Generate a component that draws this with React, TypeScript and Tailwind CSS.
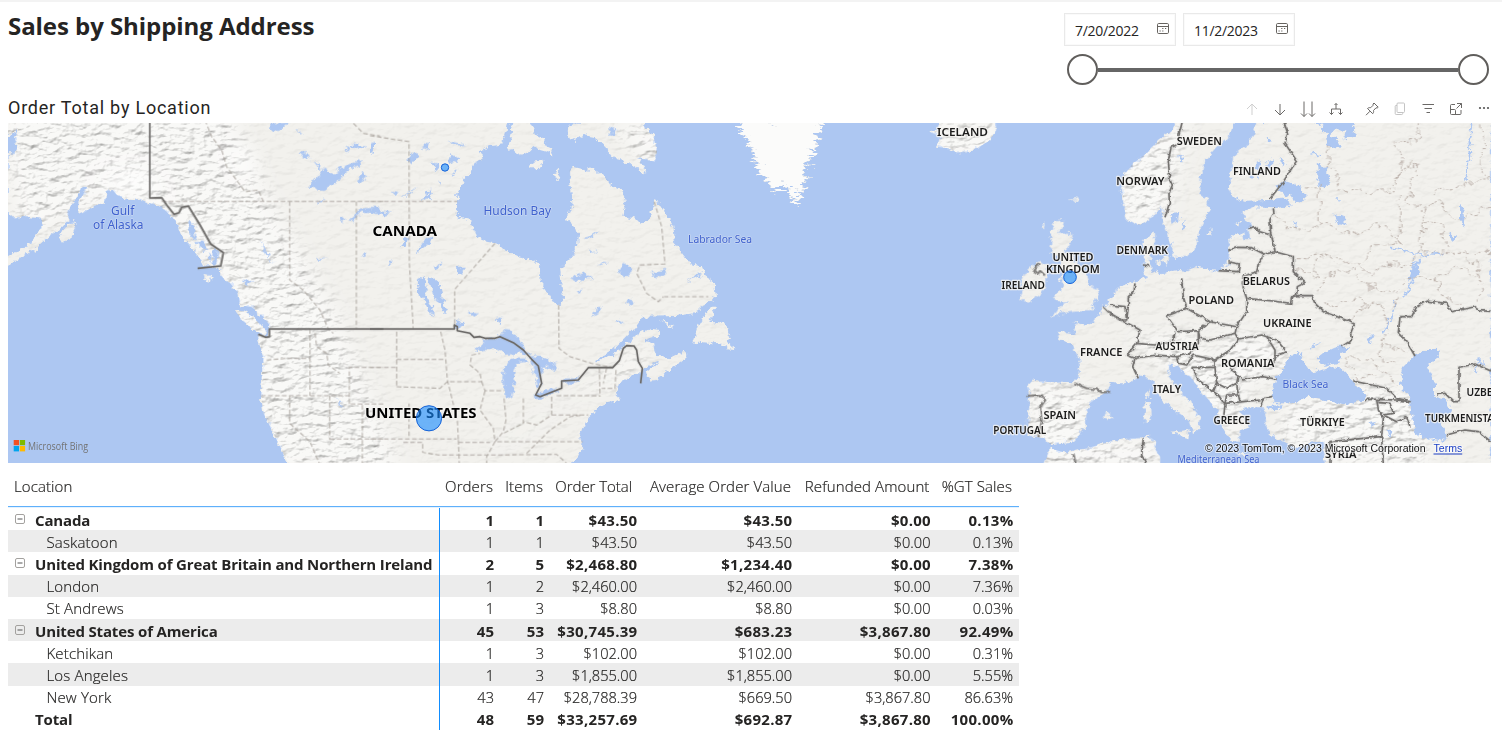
import React from 'react';

type Shape = { x: number; d: string; fill?: string };

const land: Shape[] = [
  // Alaska and western North America
  { x: 0, d: 'M24 0H1150V1040H870L850 1000L820 940L803 905L790 880L783 830L785 780L790 710L778 670L772 645L805 652L808 615L790 590L755 562L720 555L715 520L690 490L665 470L660 440L612 437L595 405L570 380L545 345L530 305L510 285L480 258L450 250L420 238L380 236L350 225L338 210L318 212L320 232L310 250L280 258L250 280L235 272L240 240L262 200L245 200L225 240L205 268L205 300L180 325L145 352L110 385L60 415L24 434V408L60 390L95 365L112 340L130 312L120 292L70 288L45 297L24 280V100L45 100L55 75L45 60L55 25L24 50Z' },
  { x: 0, d: 'M178 355L190 325L222 303L230 318L215 350L190 370ZM705 570L735 575L765 595L800 635L790 645L755 625L725 600ZM608 462L633 465L630 488L620 486Z' },
  // Central and eastern North America
  { x: 1110, d: 'M0 0H415L410 30L400 70L360 75L325 95L340 120L310 130L300 160L280 180L270 205L262 220L260 290L300 300L315 350L350 365L375 370L430 405L470 415L510 430L512 490L535 520L550 545L565 557L580 545L575 500L570 440L600 415L620 385L625 340L612 320L588 300L595 280L608 260L605 220L600 190L597 150L610 140L640 148L680 150L710 175L725 200L760 215L765 250L760 290L790 295L810 315L840 290L850 270L850 240L865 245L880 270L910 320L915 370L940 405L960 430L1000 445L1010 475L1032 488L1038 530L1010 550L970 580L920 588L820 590L790 630L740 680L680 722L750 690L790 650L840 625L867 630L860 650L820 665L852 670L860 710L900 715L945 692L953 712L900 745L860 780L838 782L830 755L870 725L820 745L815 760L790 760L740 795L740 820L750 840L710 850L680 865L655 900L640 925L625 950L640 985L600 1040H0Z' },
  { x: 1110, d: 'M430 0L425 40L415 80L450 110L470 100L490 78L510 90L545 100L550 88L520 75L525 55L500 50L480 0ZM595 50L598 20L620 5H810L850 50L862 90L855 125L830 120L805 110L830 160L800 145L760 120L720 110L705 78L670 50L640 45L615 60ZM480 145L490 125L518 122L505 145ZM552 165L560 150L568 160L562 180ZM990 610L1020 560L1038 560L1020 605L1060 612L1080 640L1070 665L1098 688L1075 685L1050 672L985 665L970 672ZM868 600L915 618L900 620Z' },
  // Iceland, Ireland, Great Britain
  { x: 2220, d: 'M600 0L592 30L570 37L602 50L588 80L625 85L650 97L680 97L720 80L750 60L770 30L768 0Z' },
  { x: 2220, d: 'M945 305L975 300L970 318L952 338L1000 340L990 370L975 395L1000 410L1020 440L1040 470L1045 495L1070 505L1074 525L1055 555L1068 563L1050 573L1000 575L960 580L935 592L955 565L985 545L960 543L938 535L960 515L970 495L960 475L975 455L960 430L955 405L930 400L935 360L930 335ZM875 440L900 422L920 440L918 500L900 525L860 548L835 540L850 510L840 490L850 465ZM905 320L915 310L912 325ZM985 238L1015 232L1018 241ZM1085 890L1100 880L1118 888L1105 897Z' },
  // Scandinavia
  { x: 3330, d: 'M205 0L190 30L150 60L110 100L70 130L35 175L38 230L50 300L90 315L130 290L152 262L165 320L185 370L190 410L230 410L260 380L265 330L300 270L290 235L270 220L272 170L285 120L320 80L350 60L375 0Z' },
  // Continental Europe
  { x: 3330, d: 'M100 440L105 425L100 400L100 360L135 340L135 365L125 395L118 425L125 450L150 460L200 450L220 455L260 440L300 450L325 452L355 430L358 400L355 370L370 345L395 340L400 355L420 355L415 325L430 315L405 300L400 275L430 262L490 265L545 258L530 235L475 240L400 242L358 222L360 160L370 110L405 80L430 45L437 0H1143V1040H645L640 965L600 965L560 985L520 965L480 945L470 920L465 880L452 862L410 862L388 872L402 895L415 925L390 930L385 965L365 962L350 940L330 905L325 870L300 845L280 820L240 770L205 740L180 728L175 765L200 800L240 850L272 895L265 932L250 940L240 905L190 870L150 830L130 785L100 762L70 780L40 790L0 790L-10 815L-60 850L-75 890L-75 920L-110 965L-180 972L-195 955L-245 948L-245 900L-240 830L-250 800L-230 780L-180 787L-110 790L-95 770L-92 720L-110 680L-160 650L-155 635L-110 640L-100 620L-105 605L-70 615L-35 590L-20 560L10 530L25 500L70 485L108 478Z' },
  { x: 3330, d: 'M-200 1040L-180 985L-130 1000L-70 985L0 965L60 955L120 950L140 965L135 985L150 1010V1040ZM180 935L238 930L235 955L215 950ZM103 850L123 845L125 900L105 908ZM118 805V835L106 830ZM595 985L625 975L610 995ZM375 1000L425 1005L400 1012ZM135 425L155 420L150 440ZM160 405L178 410L172 435L158 425ZM292 345L305 325L303 345ZM370 310L390 305L385 320Z' },
];

const greenland = 'M-15 0H248L238 35L222 45L230 70L212 85L222 100L198 115L200 140L188 155L196 180L180 190L185 215L170 220L175 240L163 252L158 235L145 238L145 215L130 190L110 205L90 210L85 185L70 182L50 140L35 110L38 95L20 80L25 65L5 50Z';

const water: Shape[] = [
  // Western and northern Canadian lakes
  { x: 0, d: 'M805 10L870 8L850 25L820 38ZM920 205L950 170L970 145L1000 160L1040 135L1090 120L1080 135L1050 145L1020 180L970 210ZM895 98L925 100L930 120L905 110ZM940 115L965 145L955 150ZM1035 85L1060 70L1100 80L1080 90L1050 80L1040 100ZM1070 180L1085 158L1105 172L1080 188ZM1045 300L1080 265L1145 262V280L1085 275L1060 300ZM1020 295L1032 290L1030 312ZM780 360L800 395L820 430L795 400ZM945 245L970 235L962 247ZM945 412L985 416L955 419ZM1085 395L1098 400L1095 415ZM1008 835L1035 865L1018 858ZM725 478L765 485L740 495ZM890 25L905 45L895 40Z' },
  { x: 0, d: 'M570 300L590 330L580 360L565 335ZM583 362L610 365L625 385L612 395ZM620 405L635 400L632 430ZM640 385L655 390L650 432L640 430ZM735 570L765 575L780 605L755 585Z' },
  { x: 1110, d: 'M115 120L125 98L145 100L138 120L125 135ZM155 85L180 65L175 90ZM235 125L242 98L258 110L270 118L245 130ZM185 128L208 130L205 145L195 150ZM155 245L170 215L185 210L175 225L182 235ZM205 180L216 200L208 195ZM232 62L290 75L260 76ZM250 150L262 150L252 165ZM65 215L90 220L78 228ZM95 235L140 200L115 225ZM90 380L105 350L118 355L110 380ZM135 405L155 370L190 345L180 370ZM190 435L215 432L200 446ZM0 270L65 278L40 285L0 278ZM50 425L70 425L60 435ZM175 475L195 472L212 500L218 540L232 585L220 575L205 540L185 520ZM140 485L160 470L170 500L165 525L185 560L195 585L182 580L160 540L145 520ZM380 590L400 595L392 615L378 608ZM292 578L328 580L310 590ZM260 440L285 440L265 465ZM255 600L280 605L275 625L260 625ZM0 70L15 65L15 90L0 105Z' },
  { x: 1110, d: 'M310 695L345 660L380 655L400 630L425 632L450 658L470 690L485 705L450 700L405 705L380 690L345 690ZM402 745L425 715L470 715L475 725L440 730L430 760L432 800L420 838L405 830L400 780ZM480 708L520 712L560 735L560 755L530 740L515 740L518 765L510 790L505 805L495 765L488 735ZM490 830L520 812L570 805L560 815L505 838ZM572 785L580 775L620 775L630 765L625 785L580 792ZM745 455L760 430L785 440L785 460L765 475ZM845 455L890 450L885 465L855 475ZM600 475L640 458L670 475L620 482ZM640 357L688 333L660 355ZM655 385L680 395L665 398ZM680 438L715 422L695 438ZM670 590L680 560L698 553L685 580ZM620 512L637 510L628 522ZM772 545L785 535L793 550L780 562ZM735 605L745 598L760 610ZM945 485L985 460L1000 465ZM718 20L745 40L720 45Z' },
  // Black Sea, Azov, Marmara, Caspian
  { x: 3330, d: 'M490 850L488 800L500 770L525 740L540 705L580 700L575 720L600 755L625 750L620 755L660 740L690 745L735 790L765 825L760 840L700 855L650 840L600 830L545 850ZM620 715L650 690L690 680L722 682L690 705L692 728L640 737ZM465 858L515 856L510 866L480 868ZM900 720L940 690L985 690L990 710L950 740L975 790L975 830L1015 840L1020 870L995 900L1010 950L1000 965L940 955L915 935L905 900L900 840L870 790L880 740Z' },
  // White Sea and the northern lakes
  { x: 3330, d: 'M605 0L640 15L635 35L655 40L645 65L665 85L690 80L680 60L665 50L665 35L685 25L710 35L700 55L740 50L722 0ZM535 185L575 200L587 232L560 250L540 225L510 215L490 195ZM620 130L650 145L660 180L645 207L620 190L625 165ZM598 95L635 105L625 112ZM470 50L485 62L475 70ZM470 125L488 118L485 150L472 140ZM440 125L455 120L442 190ZM510 110L530 130L520 145ZM415 145L430 175L420 170ZM180 280L210 275L208 300L185 308ZM215 325L228 295L222 330ZM200 105L225 115L215 122ZM670 280L705 295L710 315L685 310ZM672 238L690 238L685 245ZM545 312L565 305L562 318ZM1050 250L1060 270L1065 320L1050 300ZM1015 340L1042 350L1025 360ZM770 650L792 645L780 675ZM600 690L635 665L610 675ZM832 925L848 935L838 950ZM775 912L800 908L785 920ZM893 485L915 430L935 410L920 440L925 465Z' },
];

const rivers: Shape[] = [
  { x: 3330, d: 'M1085 10L1078 60L1082 110L1068 150L1072 180M840 385L880 390L930 405L1000 400M915 420L905 450L910 480L890 510L885 530M855 545L845 590L820 640M1095 760L1105 715L1125 735' },
  { x: 1110, d: 'M680 722L735 690L780 655' },
];

const nations: Shape[] = [
  { x: 0, d: 'M449 0V234L485 233L500 255L522 283L537 278L545 262L565 258L600 315L632 372L670 398L662 438L593 445M1150 627H808V650L797 652L775 643' },
  { x: 1110, d: 'M0 627H253V615L262 620V632L300 640L312 652L330 650L345 655L375 655L390 650L430 668L460 690L485 718L505 738L515 790L497 825L510 830L575 805L575 783L625 780L655 743H728L748 722L760 685L770 677L792 678L800 690L805 725L817 745L812 790' },
  { x: 2220, d: 'M897 430L880 452L895 460L900 452L915 466M1003 790L1040 805L1070 808L1085 817L1110 815M862 828L905 825L916 840L900 862L905 905L895 950M1000 1000L1008 1035M1090 560L1110 580L1140 600' },
  { x: 3330, d: 'M218 0L207 45L207 72L183 82L175 125L180 180L187 195L177 220L178 250L165 292M520 0L533 40L525 70L560 122L520 185L480 236M490 265L492 280L480 298L482 340L492 375L495 393M415 325L432 320L450 335L482 345M355 390L385 382L425 383L462 402L445 435L440 455L410 465L397 470M462 402L495 395L550 410L550 455L570 475L585 488L562 500L560 527L545 530L542 550L490 543L410 535L397 490L400 465M355 425L388 432L385 455L325 452M215 475L220 530L230 565L300 605L380 620L410 575L410 535M230 565L170 588L205 635L265 632L300 605M265 632L270 655L300 660L375 640L380 620M195 635L190 665L135 675L80 670L90 630L0 580M75 490L72 515L55 530L55 560L50 600M0 555L45 560L50 600L30 600M80 670L50 705L75 715L140 705L200 710L240 700L265 670L265 632M75 715L68 740L85 775M200 710L205 730L230 735L250 705L315 720L360 690L385 657L375 640M385 657L455 645L500 660L530 695L500 705L490 730M470 650L495 690L495 725M562 527L605 527L615 550L640 575L710 600L733 612L722 640L725 660L695 680M360 745L390 770L395 780L460 770L500 778M245 742H315V720M245 742L265 780L310 815L320 790L315 742M310 815L325 825L345 855L340 900M320 790L350 805L380 790L385 825L350 825L345 850L450 840L490 828M385 825L390 845M380 790L385 765M452 860L460 838L490 828M730 783L830 805L860 835L900 845L860 840L800 838L765 838M800 838L805 870L820 895L815 950L660 965V1040M805 848L840 850L850 880L820 885M820 885L860 905L890 892L900 920M815 950L820 1035M100 955L95 1005L110 1035M915 708L890 665L865 640L870 590L905 590L920 560L950 543L1010 550L1025 575L1050 570L1095 560L1110 572L1143 574M1143 753L1095 732L1047 742V845L1030 845L1005 820L980 825M1010 945L1065 930L1105 935L1143 965M102 435L122 438' },
];

const provinces: Shape[] = [
  { x: 0, d: 'M485 244H1150M869 244V480L910 510L960 570L985 627L1000 640M1069 244V627M615 0L635 50L665 90L680 140L735 215L775 210L790 244M930 627V827M800 720L860 715L930 715M783 827H1048V852H1150M1048 852V742H1150M869 827V910L930 965L960 1035M989 827V960M945 640L950 680L980 700L985 735L1020 760M1087 855V1035M989 957H1150M1060 10L1090 40L1140 48' },
  { x: 1110, d: 'M0 47L117 65L118 430L130 627M0 244H262M375 370L254 508V615M566 555L567 685L600 710L665 730L728 743M80 635V800M80 718H225M212 635L225 690L232 780L262 900L265 960M80 800L210 805L232 785H335L330 760L300 735L305 705L330 700M0 957H260M117 850V957M335 785L345 812H402M345 812L330 870L370 925L375 965L350 1010V1035M402 835L408 900L400 935L375 965H638M460 835V910L400 940M545 830V885L500 915L460 905M545 885H655M560 827H690M688 743L690 830M710 743L700 790M738 750L735 805H695M265 960L268 1035M100 967H158V997L205 1005H355L560 1003L590 1030M0 742H80M882 530H1015M853 245L875 320L885 432L810 435L800 460L830 520L865 545L880 530M470 1000L540 930L600 890L640 885M265 967H360' },
  { x: 3330, d: 'M655 85L660 130L690 210L780 215L860 205L870 150L920 125L915 170L900 200L900 255L950 265L1000 240L1000 270L1040 300L1143 260M935 9L920 60L845 70L875 90L870 150M630 195V310L600 330L550 325L525 320L500 280M590 205L635 195M550 410L600 410L650 400L690 430L750 430L790 380L870 370L840 325L795 320L720 345L650 310L630 310M970 225L970 210L1040 205L1110 180H1143M1115 10L1120 90L1110 160L1143 175M750 430L780 470L840 430L900 440L930 390L1000 400H1143M620 520L650 470L730 450L770 500L870 515L905 470L975 480L1010 540L1060 550M625 480L610 430L650 400M760 565L820 555L840 620L815 670L870 680L895 700M710 600L760 565L750 530L640 560M700 720L760 720L830 750L860 800M815 670L800 715L860 720M1010 390L1000 310L940 310L930 390M870 370L870 215M1105 545V430L1075 425L1065 380M550 455L600 450L625 480M700 720L740 770L800 770M870 515L840 570M950 265L940 310M975 480L1040 440L1105 470' },
];

type Label = [text: string, x1: number, x2: number, y: number, size: number, kind: 'n' | 'w' | 'b'];
const labels: Label[] = [
  ['CANADA', 372.5, 437, 236.2, 14, 'b'],
  ['UNITED STATES', 365, 476.5, 418.3, 13.8, 'b'],
  ['Hudson Bay', 483.5, 551, 215, 12, 'w'],
  ['Labrador Sea', 688, 752, 243, 10.5, 'w'],
  ['Gulf', 111, 134.3, 215.3, 12, 'w'],
  ['of Alaska', 93, 143.5, 229, 12, 'w'],
  ['ICELAND', 937, 988, 135.8, 11.5, 'n'],
  ['SWEDEN', 1176.7, 1222, 145.2, 11.5, 'n'],
  ['FINLAND', 1233, 1281, 175.4, 11.5, 'n'],
  ['NORWAY', 1116.3, 1164.5, 185, 11.5, 'n'],
  ['DENMARK', 1116.5, 1168, 254, 11.5, 'n'],
  ['BELARUS', 1242.7, 1290, 285.4, 11.5, 'n'],
  ['POLAND', 1188.5, 1234, 304, 11.5, 'n'],
  ['UKRAINE', 1263, 1311.5, 327.4, 11.5, 'n'],
  ['AUSTRIA', 1155.5, 1198.5, 349.7, 11.5, 'n'],
  ['ROMANIA', 1221, 1274.3, 367.2, 11.5, 'n'],
  ['ITALY', 1153, 1181, 392.9, 11.5, 'n'],
  ['GREECE', 1213.5, 1250, 424.4, 11.5, 'n'],
  ['TÜRKIYE', 1300, 1344.7, 425.6, 11.5, 'n'],
  ['UZBE', 1466.5, 1492.5, 396.4, 11.5, 'n'],
  ['TURKMENISTA', 1425, 1494, 422, 11.5, 'n'],
  ['SYRIA', 1325, 1356.5, 458, 11.5, 'n'],
  ['UNITED', 1052.5, 1093.5, 261, 11.3, 'n'],
  ['KINGDOM', 1046, 1099.7, 272.7, 11.3, 'n'],
  ['IRELAND', 1001.5, 1045, 289, 11.5, 'n'],
  ['FRANCE', 1080, 1122.5, 355.6, 11.5, 'n'],
  ['SPAIN', 1043.5, 1076, 418.6, 11.5, 'n'],
  ['PORTUGAL', 993.3, 1046.2, 433.9, 11.5, 'n'],
  ['Black Sea', 1282.5, 1328.3, 387.6, 10.8, 'w'],
  ['Mediterranean Sea', 1177.5, 1259.5, 463, 10, 'w'],
];

const labelClass = {
  n: "fill-[#1c1c1c] font-semibold font-['Noto_Sans','Open_Sans',sans-serif]",
  b: "fill-black font-bold font-['Noto_Sans','Open_Sans',sans-serif]",
  w: "fill-[#3f62cf] font-normal font-['Noto_Sans','Open_Sans',sans-serif]",
};

function Layer({ shapes, ...rest }: { shapes: Shape[] } & React.SVGProps<SVGGElement>) {
  return (
    <g transform="translate(0 120) scale(.33333)">
      <g {...rest}>
        {shapes.map((s, i) => (
          <path key={i} d={s.d} transform={`translate(${s.x} 0)`} />
        ))}
      </g>
    </g>
  );
}

function WorldMap() {
  return (
    <svg className="block h-[340px] w-[1483px]" viewBox="8 123 1483 340" role="img" aria-label="Order total by location">
      <defs>
        <filter id="coast" filterUnits="userSpaceOnUse" x="0" y="-20" width="4520" height="1080">
          <feTurbulence type="fractalNoise" baseFrequency=".06" numOctaves="4" seed="4" />
          <feDisplacementMap in="SourceGraphic" scale="24" xChannelSelector="R" yChannelSelector="G" />
        </filter>
        <filter id="fjords" filterUnits="userSpaceOnUse" x="2150" y="-20" width="380" height="340">
          <feTurbulence type="fractalNoise" baseFrequency=".03 .13" numOctaves="4" seed="7" />
          <feDisplacementMap in="SourceGraphic" scale="60" xChannelSelector="R" yChannelSelector="G" />
        </filter>
        <filter id="border" filterUnits="userSpaceOnUse" x="0" y="-20" width="4520" height="1080">
          <feTurbulence type="fractalNoise" baseFrequency=".07" numOctaves="2" seed="9" />
          <feDisplacementMap in="SourceGraphic" scale="11" xChannelSelector="R" yChannelSelector="G" />
        </filter>
        <filter id="oblast" filterUnits="userSpaceOnUse" x="3700" y="-20" width="820" height="1080">
          <feTurbulence type="fractalNoise" baseFrequency=".03" numOctaves="2" seed="3" />
          <feDisplacementMap in="SourceGraphic" scale="42" xChannelSelector="R" yChannelSelector="G" />
        </filter>
        <filter id="relief" filterUnits="userSpaceOnUse" x="8" y="123" width="1483" height="340" colorInterpolationFilters="sRGB">
          <feTurbulence type="fractalNoise" baseFrequency=".085 .15" numOctaves="4" seed="11" />
          <feColorMatrix values="0 0 0 0 0 0 0 0 0 0 0 0 0 0 0 1 0 0 0 0" />
          <feDiffuseLighting surfaceScale="2.2" diffuseConstant="1.15" lightingColor="#fff">
            <feDistantLight azimuth="235" elevation="60" />
          </feDiffuseLighting>
        </filter>
        <filter id="soft" x="-30%" y="-30%" width="160%" height="160%">
          <feGaussianBlur stdDeviation="9" />
        </filter>
        <clipPath id="landClip">
          {land.map((s, i) => (
            <path key={i} d={s.d} transform={`translate(${s.x / 3} 120) scale(.33333)`} />
          ))}
        </clipPath>
        <mask id="mountains" maskUnits="userSpaceOnUse" x="8" y="123" width="1483" height="340">
          <rect x="8" y="123" width="1483" height="340" fill="#151515" />
          <g fill="#999" filter="url(#soft)">
            <path d="M0 110H230L270 200L340 320L400 470H250L235 320L190 240L120 195L20 240Z" />
            <path d="M1110 150L1190 120L1165 220L1120 230ZM1130 340L1190 335L1250 400L1240 440L1210 420L1170 370ZM1290 400L1420 390L1430 470L1330 460L1275 440ZM1030 380L1095 390L1080 440L1030 440ZM1340 370L1410 400L1400 420Z" />
            <path d="M930 120H1000V160H930ZM1020 440H1160V470H1020ZM1220 335L1280 340L1290 370L1230 390Z" />
            <path d="M480 460L570 400L640 370L650 345L600 380L520 430ZM610 123L665 123L660 180Z" />
          </g>
        </mask>
      </defs>

      <rect x="8" y="123" width="1483" height="340" fill="#adc7f2" />
      <Layer shapes={land} fill="#f1f0ec" filter="url(#coast)" />
      <g clipPath="url(#landClip)">
        <g mask="url(#mountains)" className="mix-blend-multiply">
          <rect x="8" y="123" width="1483" height="340" filter="url(#relief)" />
        </g>
        <g fill="#fff" opacity=".7" filter="url(#soft)">
          <path d="M232 145L250 150L256 175L238 170ZM95 178L140 170L165 195L120 192Z" />
        </g>
      </g>
      <Layer shapes={[{ x: 2225, d: greenland }]} fill="#fbfbfa" stroke="#e3e6ea" strokeWidth="3" filter="url(#fjords)" />
      <Layer shapes={water} fill="#adc7f2" filter="url(#coast)" />
      <Layer shapes={rivers} fill="none" stroke="#adc7f2" strokeWidth="5" filter="url(#coast)" />
      <Layer shapes={provinces.slice(0, 2)} fill="none" stroke="#aaa49e" strokeWidth="3.2" strokeDasharray="14 7" opacity=".9" />
      <Layer shapes={provinces.slice(2)} fill="none" stroke="#b9aea8" strokeWidth="2.8" strokeDasharray="10 6" filter="url(#oblast)" />
      <g>
        <Layer shapes={nations.slice(0, 2)} fill="none" stroke="#999" strokeWidth="9" opacity=".3" strokeLinejoin="round" />
        <Layer shapes={nations.slice(2)} fill="none" stroke="#999" strokeWidth="9" opacity=".3" strokeLinejoin="round" filter="url(#border)" />
        <Layer shapes={nations.slice(0, 2)} fill="none" stroke="#6d6b69" strokeWidth="4.8" strokeLinejoin="round" />
        <Layer shapes={nations.slice(2)} fill="none" stroke="#757371" strokeWidth="4.8" strokeLinejoin="round" filter="url(#border)" />
      </g>

      <g stroke="#f5f4f1" strokeLinejoin="round">
        {labels.map(([t, x1, x2, y, size, kind]) => (
          <text
            key={t}
            x={x1}
            y={y}
            fontSize={size}
            textLength={x2 - x1}
            lengthAdjust="spacingAndGlyphs"
            className={labelClass[kind]}
            strokeWidth={kind === 'w' ? 1.4 : 2.4}
            strokeOpacity={kind === 'w' ? 0.35 : 0.8}
            paintOrder="stroke"
          >
            {t}
          </text>
        ))}
      </g>

      <g fill="#1a8cff" fillOpacity=".62" stroke="#1260d6" strokeWidth="1">
        <circle cx="445" cy="167.5" r="3.7" />
        <circle cx="429" cy="418.3" r="12.6" />
        <circle cx="1070" cy="277.2" r="6.3" />
      </g>

      <path d="M13.7 440h5.3v5.2h-5.3z" fill="#f25022" />
      <path d="M19.8 440h5.3v5.2h-5.3z" fill="#7fba00" />
      <path d="M13.7 446h5.3v5.4h-5.3z" fill="#00a4ef" />
      <path d="M19.8 446h5.3v5.4h-5.3z" fill="#ffb900" />
      <text x="28" y="449.5" fontSize="10.5" textLength="60" lengthAdjust="spacingAndGlyphs" className="fill-[#737373] font-['Open_Sans',sans-serif]">Microsoft Bing</text>
      <g className="font-['Liberation_Sans',sans-serif]" fontSize="10.5" stroke="#fff" strokeOpacity=".6" strokeWidth="2" paintOrder="stroke">
        <text x="1205" y="452.3" textLength="220.5" lengthAdjust="spacingAndGlyphs" fill="#111">© 2023 TomTom, © 2023 Microsoft Corporation</text>
        <text x="1433.5" y="452.3" textLength="28.7" lengthAdjust="spacingAndGlyphs" fill="#1c3fc4">Terms</text>
      </g>
      <path d="M1433.5 454h28.7" stroke="#1c3fc4" strokeWidth="1" />
    </svg>
  );
}

function DateBox({ value }: { value: string }) {
  return (
    <div className="flex h-[33px] w-[112px] items-center justify-between border border-[#e9e9e9] pl-[10px] pr-[6px] shadow-[inset_0_0_0_1px_#fafafa]">
      <span className="pt-[2px] text-[14px] tracking-[-0.3px] text-[#252423]">{value}</span>
      <svg className="-mt-[1px] h-3 w-3" viewBox="0 0 12 12" fill="none" stroke="#66635f">
        <rect x=".5" y=".5" width="11" height="10" rx="1.2" />
        <path d="M.5 3.5h11" />
        <path d="M5.2 5.5h1.2M8 5.5h1.2M2.5 8h1.2M5.2 8h1.2" strokeWidth="1.2" />
      </svg>
    </div>
  );
}

function Icon({ d, className = '' }: { d: string; className?: string }) {
  return (
    <svg className={`h-4 w-4 ${className}`} viewBox="0 0 16 16" fill="none" stroke="currentColor" strokeWidth="1">
      <path d={d} />
    </svg>
  );
}

function Toolbar() {
  return (
    <div className="-mt-[2px] flex h-4 items-center gap-3 text-[#6b6967]">
      <Icon className="text-[#cfcfcf]" d="M8 14V3M3 8l5-5 5 5" />
      <Icon d="M8 3v11M3 9l5 5 5-5" />
      <Icon d="M4 .5V15.5M1 12.5l3 3 3-3M12 .5V15.5M9 12.5l3 3 3-3" />
      <Icon d="M8 2.5V8M3.5 13.5V8h9v5.5M1.5 11.5l2 2 2-2M10.5 11.5l2 2 2-2M6.5 4L8 2.5 9.5 4" />
      <Icon className="ml-[7.5px]" d="M10 2l4.2 4.2-1 .8-1.2-.2-2.5 2.7c.3 1.5 0 2.3-.8 3.2L3.5 7.5c.9-.8 1.9-1 3.2-.8L9.2 4.2 9 3zM6 10.2L2 14.2" />
      <Icon className="text-[#c4c4c4]" d="M6 2h5.5a1 1 0 0 1 1 1v7.5a1 1 0 0 1-1 1H6a1 1 0 0 1-1-1V3a1 1 0 0 1 1-1zM5 4.5H4a.8.8 0 0 0-.8.8V12.5a1 1 0 0 0 1 1h5.5a1 1 0 0 0 1-1v-1" />
      <Icon className="ml-[.5px]" d="M2.5 3.5h11.5M4.5 7.5h7.5M6.5 11.5h3.5" />
      <Icon d="M7 3.5H3.5a1 1 0 0 0-1 1v8a1 1 0 0 0 1 1H12a1 1 0 0 0 1-1V9M9 2.5h4.5v4.5M13.5 2.5L8.5 7.5M2.5 8.5h4a1 1 0 0 1 1 1v4" />
      <svg className="h-4 w-4" viewBox="0 0 16 16" fill="#555">
        <circle cx="4" cy="7" r="1.1" />
        <circle cx="8" cy="7" r="1.1" />
        <circle cx="12" cy="7" r="1.1" />
      </svg>
    </div>
  );
}

type Row = { name: string; kind: 'group' | 'city' | 'total'; shaded?: boolean; v: string[] };
const rows: Row[] = [
  { name: 'Canada', kind: 'group', v: ['1', '1', '$43.50', '$43.50', '$0.00', '0.13%'] },
  { name: 'Saskatoon', kind: 'city', shaded: true, v: ['1', '1', '$43.50', '$43.50', '$0.00', '0.13%'] },
  { name: 'United Kingdom of Great Britain and Northern Ireland', kind: 'group', v: ['2', '5', '$2,468.80', '$1,234.40', '$0.00', '7.38%'] },
  { name: 'London', kind: 'city', shaded: true, v: ['1', '2', '$2,460.00', '$2,460.00', '$0.00', '7.36%'] },
  { name: 'St Andrews', kind: 'city', v: ['1', '3', '$8.80', '$8.80', '$0.00', '0.03%'] },
  { name: 'United States of America', kind: 'group', shaded: true, v: ['45', '53', '$30,745.39', '$683.23', '$3,867.80', '92.49%'] },
  { name: 'Ketchikan', kind: 'city', v: ['1', '3', '$102.00', '$102.00', '$0.00', '0.31%'] },
  { name: 'Los Angeles', kind: 'city', shaded: true, v: ['1', '3', '$1,855.00', '$1,855.00', '$0.00', '5.55%'] },
  { name: 'New York', kind: 'city', v: ['43', '47', '$28,788.39', '$669.50', '$3,867.80', '86.63%'] },
  { name: 'Total', kind: 'total', v: ['48', '59', '$33,257.69', '$692.87', '$3,867.80', '100.00%'] },
];
const cols = 'grid grid-cols-[432px_60px_50px_93px_155px_138.5px_82.5px] whitespace-nowrap';
const headers = ['Orders', 'Items', 'Order Total', 'Average Order Value', 'Refunded Amount', '%GT Sales'];
const light = 'font-light [-webkit-text-stroke:0.2px_#252423]';

function Table() {
  return (
    <div className="w-[1011px] text-[#252423]">
      <div className={`${cols} ${light} h-[44px] items-center border-b border-[#5fb0fb] pt-1 text-[15px] tracking-[0.1px]`}>
        <div className="pl-[6px]">Location</div>
        {headers.map((h) => (
          <div key={h} className={h === 'Order Total' ? 'pr-[11px] text-right tracking-[-0.05px]' : 'pr-[7px] text-right'}>{h}</div>
        ))}
      </div>
      <div className="h-px bg-[#e4f2ff]" />
      {rows.map((r) => {
        const city = r.kind === 'city';
        return (
          <div
            key={r.name}
            className={`${cols} h-[22.2px] items-center leading-5 ${r.shaded ? 'bg-[#ececec]' : ''} ${city ? light : 'font-bold'}`}
          >
            <div className="flex h-[22.2px] items-center">
              <div className="flex w-[27px] pl-[7px]">
                {r.kind === 'group' && (
                  <svg className="h-[10px] w-[10px]" viewBox="0 0 10 10" fill="none" stroke="#a3a19f">
                    <rect x=".5" y=".5" width="9" height="9" rx="1.5" />
                    <path d="M2.5 5h5" stroke="#555" />
                  </svg>
                )}
              </div>
              <span className={city ? 'pl-[11.5px] pt-px text-[15px] tracking-[0.15px]' : 'pt-px text-[15px] tracking-[-0.15px]'}>{r.name}</span>
              <span className="ml-auto h-full w-px bg-[#118dff]" />
            </div>
            {r.v.map((v, j) => (
              <div key={j} className={city ? 'pr-[6px] pt-px text-right text-[14.6px]' : 'pr-[5.5px] pt-px text-right text-[15px] tracking-[0.3px]'}>{v}</div>
            ))}
          </div>
        );
      })}
    </div>
  );
}

export default function App() {
  return (
    <main className="flex h-[737px] w-[1502px] flex-col overflow-hidden border-t-2 border-[#f3f3f3] bg-white font-['Open_Sans','Noto_Sans',sans-serif]">
      <header className="flex h-[94px] justify-between pl-2 pr-[13px]">
        <h1 className="pt-[6px] text-[24px] font-bold leading-9 tracking-[-0.06px] text-[#252423]">Sales by Shipping Address</h1>
        <div className="flex w-[425px] flex-col pt-[11px]">
          <div className="flex gap-[7px]">
            <DateBox value="7/20/2022" />
            <DateBox value="11/2/2023" />
          </div>
          <div className="mt-[7px] flex h-[33px] items-center pl-[3px] pr-[.5px]">
            <div className="h-[31px] w-[31px] rounded-full border-2 border-[#605e5c]" />
            <div className="h-[4px] flex-1 bg-[#666]" />
            <div className="h-[31px] w-[31px] rounded-full border-2 border-[#605e5c]" />
          </div>
        </div>
      </header>
      <section className="flex h-[27px] items-center justify-between pl-2 pr-[10px]">
        <h2 className="-mt-[5px] font-['Roboto',sans-serif] text-[18px] tracking-[0.77px] text-[#252423]">Order Total by Location</h2>
        <Toolbar />
      </section>
      <section className="pl-2">
        <WorldMap />
      </section>
      <section className="pl-2">
        <Table />
      </section>
    </main>
  );
}
